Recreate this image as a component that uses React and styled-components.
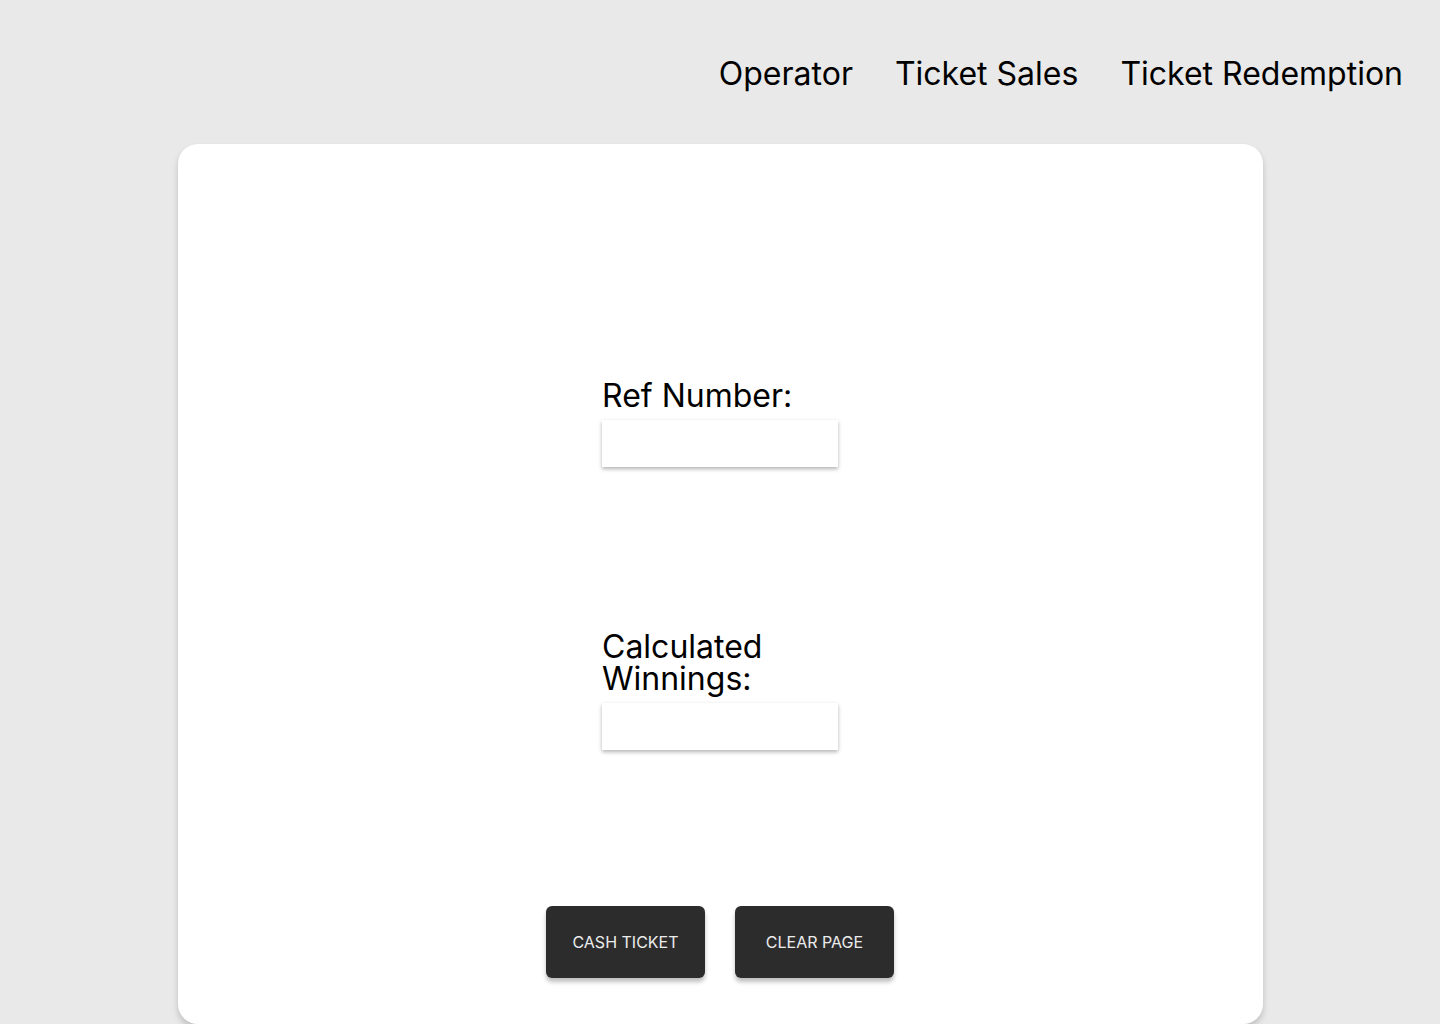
import styled, { createGlobalStyle } from "styled-components";

const GlobalStyle = createGlobalStyle`
  html, body {
    margin: 0;
    padding: 0;
    background: #e9e9e9;
    font-family: Inter, "Noto Sans", sans-serif;
    overflow: hidden;
  }
  * {
    box-sizing: border-box;
  }
`;

const Page = styled.div`
  min-height: 100vh;
  display: flex;
  flex-direction: column;
`;

const Nav = styled.nav`
  height: 144px;
  display: flex;
  justify-content: flex-end;
  align-items: flex-start;
  gap: 42px;
  padding: 55px 37px 0 0;
`;

const NavLink = styled.a`
  font-size: 32px;
  line-height: 38px;
  color: #000;
  text-decoration: none;
  cursor: pointer;
`;

const Card = styled.main`
  width: 1085px;
  height: 880px;
  margin: 0 auto;
  background: #fff;
  border-radius: 20px;
  box-shadow: 0 4px 6px rgba(0, 0, 0, 0.18);
  display: flex;
  flex-direction: column;
  align-items: center;
  padding-top: 236px;
`;

const Field = styled.div`
  width: 236px;
  display: flex;
  flex-direction: column;
  gap: 8px;
  margin-bottom: ${(p) => p.$after}px;
`;

const Label = styled.label`
  font-size: 32px;
  line-height: 32px;
  color: #000;
`;

const Input = styled.input`
  width: 236px;
  height: 47px;
  border: none;
  outline: none;
  background: #fff;
  box-shadow: 0 2px 4px rgba(0, 0, 0, 0.3);
  font-family: inherit;
  font-size: 20px;
  padding: 0 10px;
`;

const Actions = styled.div`
  display: flex;
  gap: 30px;
`;

const Button = styled.button`
  width: 159px;
  height: 72px;
  border: none;
  border-radius: 6px;
  background: #2c2c2c;
  color: #ececec;
  font-family: inherit;
  font-size: 16px;
  text-transform: uppercase;
  box-shadow: 0 4px 4px rgba(0, 0, 0, 0.25);
  cursor: pointer;
`;

export default function App() {
  return (
    <Page>
      <GlobalStyle />
      <Nav>
        <NavLink>Operator</NavLink>
        <NavLink>Ticket Sales</NavLink>
        <NavLink>Ticket Redemption</NavLink>
      </Nav>
      <Card>
        <Field $after={164}>
          <Label htmlFor="ref">Ref Number:</Label>
          <Input id="ref" type="text" />
        </Field>
        <Field $after={156}>
          <Label htmlFor="winnings">Calculated Winnings:</Label>
          <Input id="winnings" type="text" readOnly />
        </Field>
        <Actions>
          <Button>Cash Ticket</Button>
          <Button>Clear Page</Button>
        </Actions>
      </Card>
    </Page>
  );
}
